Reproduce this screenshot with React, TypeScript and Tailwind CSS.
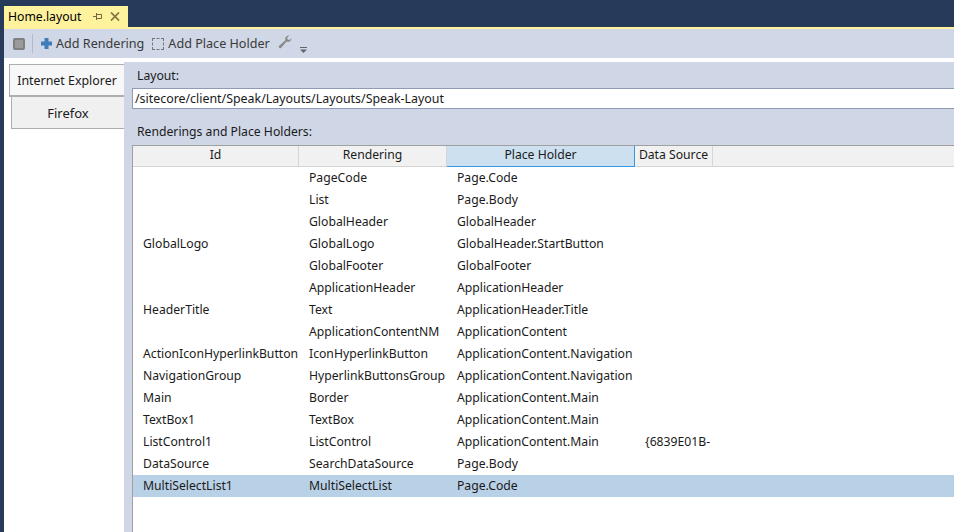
const font = { fontFamily: '"Noto Sans", "Noto Sans CJK SC", sans-serif' };
const rows = [
  ['', 'PageCode', 'Page.Code', ''],
  ['', 'List', 'Page.Body', ''],
  ['', 'GlobalHeader', 'GlobalHeader', ''],
  ['GlobalLogo', 'GlobalLogo', 'GlobalHeader.StartButton', ''],
  ['', 'GlobalFooter', 'GlobalFooter', ''],
  ['', 'ApplicationHeader', 'ApplicationHeader', ''],
  ['HeaderTitle', 'Text', 'ApplicationHeader.Title', ''],
  ['', 'ApplicationContentNM', 'ApplicationContent', ''],
  ['ActionIconHyperlinkButton', 'IconHyperlinkButton', 'ApplicationContent.Navigation', ''],
  ['NavigationGroup', 'HyperlinkButtonsGroup', 'ApplicationContent.Navigation', ''],
  ['Main', 'Border', 'ApplicationContent.Main', ''],
  ['TextBox1', 'TextBox', 'ApplicationContent.Main', ''],
  ['ListControl1', 'ListControl', 'ApplicationContent.Main', '{6839E01B-'],
  ['DataSource', 'SearchDataSource', 'Page.Body', ''],
  ['MultiSelectList1', 'MultiSelectList', 'Page.Code', ''],
];

export default function App() {
  return (
    <div className="w-[954px] h-[532px] overflow-hidden bg-[#283a59] flex flex-col text-[12.2px] text-[#1a1a1a]" style={font}>
      <div className="h-[27px] shrink-0 flex items-end pl-[4px]">
        <div className="w-[124px] h-[21px] bg-[#fff29d] flex items-center pl-[4px]">
          <span className="text-[12.2px] leading-none text-black mt-[2px]">Home.layout</span>
          <svg width="9" height="9" viewBox="0 0 9 9" className="ml-[12px]" fill="none" stroke="#6f6840" strokeWidth="1">
            <path d="M0 4.5h3M3.5 1v7M3.5 2.5h5v4h-5" />
          </svg>
          <svg width="10" height="9" viewBox="0 0 10 9" className="ml-[8px]" fill="none" stroke="#7d7340" strokeWidth="1.7">
            <path d="M1 0.5l8 8M9 0.5l-8 8" />
          </svg>
        </div>
      </div>
      <div className="flex-1 min-h-0 flex pl-[4px]">
        <div className="flex-1 min-w-0 flex flex-col bg-white">
          <div className="h-[2px] shrink-0 bg-[#fff29d]" />
          <div className="h-[29px] shrink-0 bg-[#d0d7e6] flex items-center text-[12.6px] text-[#3a3a3a]">
            <div className="w-[12px] h-[12px] ml-[9px] rounded-[2px] border-2 border-[#7f7f7f] bg-[#9a9a9a]" />
            <div className="w-px h-[19px] bg-[#b4b9c4] ml-[7px]" />
            <svg width="11" height="11" viewBox="0 0 11 11" className="ml-[8px] mr-[4px]" fill="#3f7cb8">
              <path d="M3.5 0h4v3.5H11v4H7.5V11h-4V7.5H0v-4h3.5z" />
            </svg>
            <span className="mt-[2px]">Add Rendering</span>
            <div className="w-[12px] h-[12px] ml-[8px] mr-[4px] border border-dashed border-[#777]" />
            <span className="mt-[2px]">Add Place Holder</span>
            <svg width="14" height="14" viewBox="0 0 14 14" className="ml-[8px] mb-[3px]" fill="#8a8a8a">
              <path d="M13.5 3.2a3.6 3.6 0 0 1-4.8 3.4L3.2 12.8a1.4 1.4 0 0 1-2-2l6.2-5.5A3.6 3.6 0 0 1 11.4.6L9.2 2.6l.4 1.8 1.8.5z" />
            </svg>
            <svg width="7" height="6" viewBox="0 0 7 6" className="ml-[8px] mt-[13px]" fill="#666">
              <path d="M0 0h7v1H0zM0 2.5h7L3.5 6z" />
            </svg>
          </div>
          <div className="flex-1 min-h-0 flex">
            <div className="w-[120px] shrink-0 pt-[6px] text-[12.4px] text-[#1a1a1a]">
              <div className="relative z-10 h-[33px] ml-[5px] w-[116px] pt-[2px] bg-[#f7f7f7] border border-b-2 border-[#adadad] flex items-center justify-center whitespace-nowrap">Internet Explorer</div>
              <div className="h-[32px] ml-[7px] w-[114px] pt-[2px] bg-[#f0f0f0] border border-[#adadad] border-t-0 flex items-center justify-center text-[13px]">Firefox</div>
            </div>
            <div className="flex-1 min-w-0 mt-[4px] bg-[#cfd6e6] pl-[8px] relative z-20 flex flex-col">
              <div className="h-[26px] shrink-0 flex items-center pl-[5px] pt-[2px]">Layout:</div>
              <div className="h-[21px] shrink-0 bg-white border border-[#8f9bb3] border-r-0 flex items-center pl-[2px] pt-[2px] text-[12.4px] leading-none">/sitecore/client/Speak/Layouts/Layouts/Speak-Layout</div>
              <div className="h-[36px] shrink-0 flex items-center pl-[5px] pt-[11px]">Renderings and Place Holders:</div>
              <div className="flex-1 min-h-0 bg-white border-t border-l border-[#a0a0a0] flex flex-col">
                <div className="h-[21px] shrink-0 flex bg-[#f1f1f1] border-b border-[#d5d5d5] text-center">
                  <div className="w-[166px] border-r border-[#d5d5d5] leading-[18px]">Id</div>
                  <div className="w-[148px] border-r border-[#d5d5d5] leading-[18px]">Rendering</div>
                  <div className="w-[188px] -mb-px bg-[#cde0f0] border-r border-b border-[#3399e6] leading-[18px]">Place Holder</div>
                  <div className="w-[78px] border-r border-[#d5d5d5] leading-[18px] whitespace-nowrap">Data Source</div>
                </div>
                <div>
                  {rows.map((r) => (
                    <div key={r[1]} className={`h-[22px] flex items-center whitespace-nowrap ${r[1] === 'MultiSelectList' ? 'bg-[#b9d1e6]' : ''}`}>
                      <div className="w-[166px] pl-[10px]">{r[0]}</div>
                      <div className="w-[148px] pl-[10px]">{r[1]}</div>
                      <div className="w-[188px] pl-[10px]">{r[2]}</div>
                      <div className="pl-[10px]">{r[3]}</div>
                    </div>
                  ))}
                </div>
              </div>
            </div>
          </div>
        </div>
      </div>
    </div>
  );
}
